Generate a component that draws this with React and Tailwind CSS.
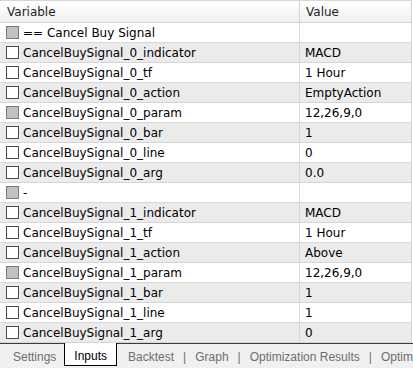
import React from 'react';

const rows = [
  { name: '== Cancel Buy Signal', value: '', filled: true },
  { name: 'CancelBuySignal_0_indicator', value: 'MACD' },
  { name: 'CancelBuySignal_0_tf', value: '1 Hour' },
  { name: 'CancelBuySignal_0_action', value: 'EmptyAction' },
  { name: 'CancelBuySignal_0_param', value: '12,26,9,0', filled: true },
  { name: 'CancelBuySignal_0_bar', value: '1' },
  { name: 'CancelBuySignal_0_line', value: '0' },
  { name: 'CancelBuySignal_0_arg', value: '0.0' },
  { name: '-', value: '', filled: true },
  { name: 'CancelBuySignal_1_indicator', value: 'MACD' },
  { name: 'CancelBuySignal_1_tf', value: '1 Hour' },
  { name: 'CancelBuySignal_1_action', value: 'Above' },
  { name: 'CancelBuySignal_1_param', value: '12,26,9,0', filled: true },
  { name: 'CancelBuySignal_1_bar', value: '1' },
  { name: 'CancelBuySignal_1_line', value: '1' },
  { name: 'CancelBuySignal_1_arg', value: '0' },
];

const Sep = () => <span className="px-[9px] text-[#6e6e6e]">|</span>;

const App = () => {
  return (
    <div
      className="w-[413px] h-[368px] bg-white overflow-hidden flex flex-col text-[12px] text-black"
      style={{ fontFamily: '"DejaVu Sans", Verdana, sans-serif' }}
    >
      {/* Header */}
      <div className="flex h-[23px] shrink-0 border-t border-b border-r border-[#d5d5d5] bg-gradient-to-b from-white to-[#f0f0f0] w-[412px]">
        <div className="w-[300px] border-r border-[#d5d5d5] pl-[7px] flex items-center text-[#1e1e1e]">Variable</div>
        <div className="flex-1 pl-[6px] flex items-center text-[#1e1e1e]">Value</div>
      </div>

      {/* Rows */}
      <div className="flex-1">
        {rows.map((r, i) => (
          <div
            key={i}
            className={`flex h-[20px] w-[412px] border-b border-r border-[#d5d5d5] ${i % 2 ? 'bg-[#ebebeb]' : 'bg-white'}`}
          >
            <div className="w-[300px] border-r border-[#d5d5d5] flex items-center pl-[6px]">
              <span
                className={`w-[13px] h-[13px] border mr-[4px] shrink-0 ${r.filled ? 'bg-[#c2c2c2] border-[#7a7a7a]' : 'bg-white border-[#4a4a4a]'}`}
              />
              <span>{r.name}</span>
            </div>
            <div className="flex-1 flex items-center pl-[5px]">{r.value}</div>
          </div>
        ))}
      </div>

      {/* Tabs */}
      <div
        className="h-[25px] shrink-0 border-t border-[#3c3c3c] bg-[#f0f0f0] flex items-start whitespace-nowrap text-[#6e6e6e] text-[12px]"
        style={{ fontFamily: '"Liberation Sans", Arial, sans-serif' }}
      >
        <span className="pl-[13px] pr-[8px] pt-[4px]">Settings</span>
        <span className="-mt-px h-[23px] px-[9px] pt-[4px] bg-white border-l border-r border-b border-black text-black">Inputs</span>
        <span className="pl-[11px] pt-[4px]">Backtest</span>
        <span className="pt-[4px]"><Sep /></span>
        <span className="pt-[4px]">Graph</span>
        <span className="pt-[4px]"><Sep /></span>
        <span className="pt-[4px]">Optimization Results</span>
        <span className="pt-[4px]"><Sep /></span>
        <span className="pt-[4px]">Optimiz</span>
      </div>
    </div>
  );
};

export default App;
